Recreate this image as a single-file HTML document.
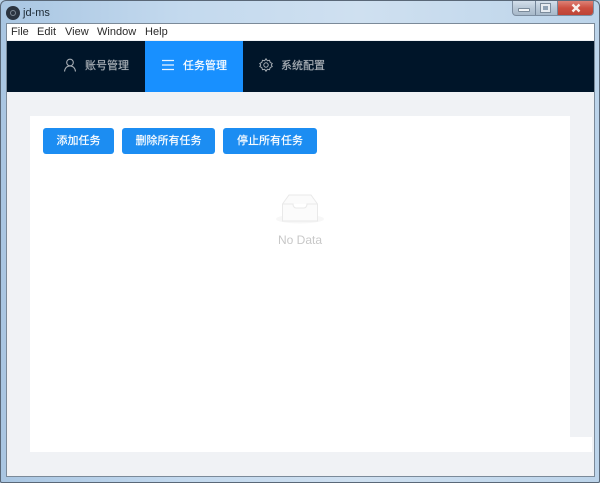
<!DOCTYPE html>
<html><head><meta charset="utf-8"><style>
html,body{margin:0;padding:0}
body{width:600px;height:483px;overflow:hidden;position:relative;background:#b9d3ea;font-family:"Liberation Sans","Noto Sans CJK SC",sans-serif}
.a{position:absolute}
#frame{left:0;top:0;width:600px;height:483px;box-sizing:border-box;border:1px solid #5a6878;border-radius:6px 6px 2px 2px;background:linear-gradient(90deg,#a9c6e2 0,#c3d9ee 30%,#cfe0f0 60%,#bcd4ea 100%);overflow:hidden}
.t{white-space:nowrap}
.nav{color:#a6adb4;font-size:11px;line-height:14px;text-shadow:0 0 .6px currentColor}
.btn{background:#1c8df2;border-radius:3px;color:#fff;font-size:11px;text-align:center;height:26px;line-height:26px;top:128px;text-shadow:0 0 .6px #fff}
.m{font-size:11px;line-height:15px;color:#2a2a2a;top:25px;letter-spacing:.02px}
</style></head><body>
<div class="a" id="frame"></div>
<!-- title -->
<div class="a" style="left:6px;top:6px;width:14px;height:14px;border-radius:50%;background:#2b3440"></div>
<div class="a" style="left:10px;top:10px;width:6px;height:6px;border-radius:50%;border:1px solid #7d8894;box-sizing:border-box"></div>
<div class="a t" style="left:23px;top:5px;font-size:11px;line-height:16px;color:#1c2833">jd-ms</div>
<!-- caption buttons -->
<div class="a" style="left:512px;top:1px;width:82px;height:15px;border:1px solid #7c8da0;border-top:none;border-radius:0 0 4px 4px;box-sizing:border-box;background:linear-gradient(#d3dfeb,#b9c8d7 50%,#a7b8c9);overflow:hidden">
  <div class="a" style="left:22px;top:0;width:1px;height:14px;background:#75869a"></div>
  <div class="a" style="left:44px;top:0;width:1px;height:14px;background:#75869a"></div>
  <div class="a" style="left:45px;top:0;width:36px;height:14px;background:linear-gradient(#dd8276,#cc4f40 50%,#bc4436)"></div>
</div>
<div class="a" style="left:518px;top:8px;width:10px;height:2px;background:#f2f5f8;border:1px solid #7a8a9a;border-radius:1px"></div>
<div class="a" style="left:541px;top:4px;width:5px;height:4px;border:2px solid #e6ebf1;outline:1px solid #7c8c9c;background:#8fa2b5"></div>
<svg class="a" style="left:569px;top:2px" width="14" height="12" viewBox="0 0 14 12"><path d="M3.5 2.5L10.5 9.5M10.5 2.5L3.5 9.5" stroke="#f7efea" stroke-width="2.4"/></svg>
<!-- client -->
<div class="a" style="left:6px;top:23px;width:589px;height:454px;background:#f0f2f5;border:1px solid #7b8a99;box-sizing:border-box"></div>
<div class="a" style="left:7px;top:24px;width:587px;height:16px;background:#fff"></div>
<div class="a t m" style="left:11px">File</div>
<div class="a t m" style="left:37px">Edit</div>
<div class="a t m" style="left:65px">View</div>
<div class="a t m" style="left:97px">Window</div>
<div class="a t m" style="left:145px">Help</div>
<!-- header -->
<div class="a" style="left:7px;top:41px;width:587px;height:51px;background:#001529"></div>
<div class="a" style="left:145px;top:41px;width:98px;height:51px;background:#1890ff"></div>
<svg class="a" style="left:63px;top:58px" width="14" height="14" viewBox="0 0 14 14" fill="none" stroke="#a6adb4" stroke-width="1.1"><circle cx="7" cy="4.5" r="3.3"/><path d="M1.5 13.5C2 10 4 8 7 8s5 2 5.5 5.5"/></svg>
<div class="a t nav" style="left:85px;top:59px">账号管理</div>
<svg class="a" style="left:161px;top:59px" width="13" height="12" viewBox="0 0 13 12" stroke="#e8f4ff" stroke-width="1.3"><path d="M1 1.5H13M1 6H13M1 10.5H13"/></svg>
<div class="a t nav" style="left:183px;top:59px;color:#fff">任务管理</div>
<svg class="a" style="left:259px;top:58px" width="14" height="14" viewBox="0 0 14 14" fill="none" stroke="#a6adb4" stroke-width="1"><path d="M7 .8l1.3 1.9 2.2-.4.7 2.1 2 1-.9 1.6.9 1.6-2 1-.7 2.1-2.2-.4L7 13.2l-1.3-1.9-2.2.4-.7-2.1-2-1 .9-1.6-.9-1.6 2-1 .7-2.1 2.2.4z"/><circle cx="7" cy="7" r="2.2"/></svg>
<div class="a t nav" style="left:281px;top:59px">系统配置</div>
<!-- content -->
<div class="a" style="left:30px;top:116px;width:540px;height:336px;background:#fff"></div>
<div class="a" style="left:570px;top:437px;width:22px;height:15px;background:#fff"></div>
<div class="a btn t" style="left:43px;width:71px">添加任务</div>
<div class="a btn t" style="left:122px;width:93px">删除所有任务</div>
<div class="a btn t" style="left:223px;width:94px">停止所有任务</div>
<!-- empty -->
<svg class="a" style="left:272px;top:190px" width="56" height="36" viewBox="0 0 56 36"><ellipse cx="28" cy="29" rx="24" ry="4.5" fill="#f7f7f7"/><path d="M10.5 14L17 5H39L45.5 14V31H10.5Z" fill="#fbfbfb" stroke="#e9e9e9"/><path d="M10.5 14H21C21 17 23 18 24 18H32C33 18 35 17 35 14H45.5" fill="#fff" stroke="#e9e9e9"/></svg>
<div class="a t" style="left:250px;width:100px;text-align:center;top:233px;font-size:12px;line-height:14px;color:#c8c8c8">No Data</div>
</body></html>
